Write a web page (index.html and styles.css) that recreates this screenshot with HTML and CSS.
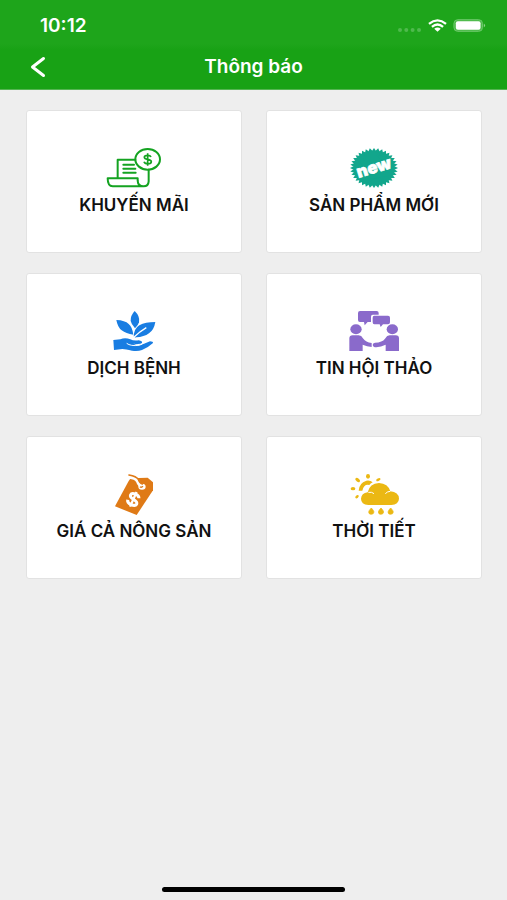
FILE: index.html
```html
<!DOCTYPE html>
<html lang="vi">
<head>
<meta charset="utf-8">
<meta name="viewport" content="width=device-width, initial-scale=1">
<title>Thông báo</title>
<link rel="stylesheet" href="styles.css">
</head>
<body>
<header class="header">
  <div class="status">
    <time class="clock">10:12</time>
    <div class="indicators">
      <svg class="signal" viewBox="0 0 24 4" aria-hidden="true"><circle cx="2" cy="2" r="2"/><circle cx="8.300" cy="2" r="2"/><circle cx="14.600" cy="2" r="2"/><circle cx="21" cy="2" r="2"/></svg>
      <svg class="wifi" viewBox="0 0 58 38" aria-hidden="true"><path d="M3 14Q29-7 55 14M12 23Q29 9 46 23" fill="none" stroke="#fff" stroke-width="7"/><path d="M19 29Q29 21 39 29L29 38Z" fill="#fff"/></svg>
      <svg class="battery" viewBox="0 0 100 40" aria-hidden="true"><rect x="2" y="2" width="88" height="36" rx="12" fill="#4cba49" stroke="#6cc86a" stroke-width="3"/><rect x="8" y="7" width="76" height="26" rx="6" fill="#fff"/><path d="M94 14q8 6 0 12Z" fill="#8bd489"/></svg>
    </div>
  </div>
  <div class="navbar">
    <button class="back" type="button" aria-label="Quay lại"><svg viewBox="0 0 16 22" aria-hidden="true"><path d="M13.500 2.500 2.500 11l11 8.500" fill="none" stroke="#fff" stroke-width="3" stroke-linecap="round" stroke-linejoin="round"/></svg></button>
    <h1 class="title">Thông báo</h1>
  </div>
</header>
<main class="grid">
  <a class="card" href="#khuyen-mai">
    <svg class="icon" viewBox="102 18 180 132" aria-hidden="true">
      <g fill="none" stroke="#14a321" stroke-width="6" stroke-linejoin="round" stroke-linecap="round">
        <path d="M143 113V59H196M236 89V124Q235 139 221 139H128Q113 139 113 115H203V122Q204 139 220 139"/>
        <path d="M160 74H192M160 86H196M160 98H197"/>
        <ellipse cx="233" cy="58" rx="37" ry="31"/>
      </g>
      <path d="M243 51Q241 46 233 46Q223 46 223 52Q223 57 233 58Q244 60 244 65Q244 71 233 71Q224 71 222 65M233 40V77" fill="none" stroke="#14a321" stroke-width="5"/>
    </svg>
    <span class="label">KHUYẾN MÃI</span>
  </a>
  <a class="card" href="#san-pham-moi">
    <svg class="icon" viewBox="132 18 180 132" aria-hidden="true">
      <g fill="#12a68c" transform="translate(222 84) scale(1.200 1)">
        <path id="tri" d="M0-60L52 30H-52Z"/>
        <use href="#tri" transform="rotate(10)"/><use href="#tri" transform="rotate(20)"/><use href="#tri" transform="rotate(30)"/><use href="#tri" transform="rotate(40)"/><use href="#tri" transform="rotate(50)"/><use href="#tri" transform="rotate(60)"/><use href="#tri" transform="rotate(70)"/><use href="#tri" transform="rotate(80)"/><use href="#tri" transform="rotate(90)"/><use href="#tri" transform="rotate(100)"/><use href="#tri" transform="rotate(110)"/>
      </g>
      <text class="burst" x="222" y="99" text-anchor="middle" transform="rotate(-17 222 84)">new</text>
    </svg>
    <span class="label">SẢN PHẨM MỚI</span>
  </a>
  <a class="card" href="#dich-benh">
    <svg class="icon" viewBox="102 30 180 132" aria-hidden="true">
      <g fill="#197de2">
        <path d="M194 36Q211 52 207 70Q204 80 195 88Q184 76 182 66Q181 50 194 36Z"/>
        <path d="M139 63Q165 64 176 75Q187 84 190 107Q168 104 155 94Q143 85 139 63Z"/>
        <path d="M256 69Q252 93 237 103Q222 114 199 115Q192 116 191 112Q193 88 208 79Q226 69 256 69Z"/>
        <path d="M130 123L151 121Q165 115 181 121Q190 126 206 124Q218 126 216 132Q211 137 190 134Q205 142 222 134L240 127Q250 127 249 132Q234 146 216 153Q203 158 186 155Q167 150 157 150L132 153Z"/>
      </g>
      <path d="M190 116Q210 97 229 86" fill="none" stroke="#fff" stroke-width="4"/>
      <path d="M170 133Q182 142 207 139Q219 137 220 129" fill="none" stroke="#fff" stroke-width="3"/>
    </svg>
    <span class="label">DỊCH BỆNH</span>
  </a>
  <a class="card" href="#tin-hoi-thao">
    <svg class="icon" viewBox="132 30 180 132" aria-hidden="true">
      <g fill="#8a6acb">
        <path d="M180 36H230Q236 36 236 42V47H218Q213 47 213 53V69H203L194 79L192 69H180Q174 69 174 63V42Q174 36 180 36Z"/>
        <path d="M223 50H264Q270 50 270 56V70Q270 76 264 76H249L242 84L239 76H223Q218 76 218 70V56Q218 50 223 50Z"/>
        <ellipse cx="168" cy="91" rx="17" ry="15"/><ellipse cx="277" cy="91" rx="17" ry="15"/>
        <path d="M148 156V118Q148 109 158 109H176Q184 109 190 119Q197 129 215 132V144Q201 143 188 137V156Z"/>
        <path d="M297 156V118Q297 109 287 109H269Q261 109 255 119Q247 130 225 131Q218 132 218 138Q219 145 229 145Q243 144 257 137V156Z"/>
      </g>
    </svg>
    <span class="label">TIN HỘI THẢO</span>
  </a>
  <a class="card" href="#gia-ca-nong-san">
    <svg class="icon" viewBox="162 21 180 132" aria-hidden="true">
      <path d="M236 48L242 40L293 38L309 52V76L260 150L195 124Z" fill="#df7a16"/>
      <path d="M238 36Q257 38 263 48Q267 60 276 64" fill="none" stroke="#fff" stroke-width="11"/>
      <ellipse cx="276" cy="65" rx="11" ry="9" fill="#fff"/>
      <path d="M237 30Q259 34 265 43Q268 54 277 57" fill="none" stroke="#df7a16" stroke-width="5" stroke-linecap="round"/>
      <path d="M270 65Q274 69 279 64" fill="none" stroke="#df7a16" stroke-width="4"/>
      <g transform="rotate(24 250 103)" fill="none" stroke="#fff"><path d="M264 93Q261 86 250 86Q237 86 237 94Q237 101 250 103Q265 105 265 112Q264 120 250 120Q237 120 235 111" stroke-width="9"/><path d="M250 79V127" stroke-width="7"/></g>
    </svg>
    <span class="label">GIÁ CẢ NÔNG SẢN</span>
  </a>
  <a class="card" href="#thoi-tiet">
    <svg class="icon" viewBox="132 21 180 132" aria-hidden="true">
      <g fill="#ebb813">
        <path d="M205 120Q183 118 183 101Q184 85 203 82Q209 55 237 54Q264 55 271 79Q296 81 297 101Q296 119 274 120Z"/>
        <path d="M176 77Q177 54 199 47Q211 45 218 52Q211 55 208 60Q192 56 187 77Z"/>
        <ellipse cx="204" cy="34" rx="6" ry="7"/>
        <ellipse cx="173" cy="45" rx="8" ry="5" transform="rotate(38 173 45)"/>
        <ellipse cx="159" cy="71" rx="7" ry="5"/>
        <ellipse cx="171" cy="95" rx="6" ry="4" transform="rotate(-42 171 95)"/>
        <ellipse cx="235" cy="44" rx="7" ry="4" transform="rotate(-28 235 44)"/>
        <path id="drop" d="M214 129Q222 137 222 141Q221 148 214 148Q206 148 206 141Q206 137 214 129Z" stroke="#ebb813" stroke-width="2"/>
        <use href="#drop" x="29"/><use href="#drop" x="58"/>
      </g>
      <path d="M205 82Q216 80 222 86M271 79Q262 79 256 86" fill="none" stroke="#fff" stroke-width="3"/>
    </svg>
    <span class="label">THỜI TIẾT</span>
  </a>
</main>
<footer class="footer"><div class="home-bar"></div></footer>
</body>
</html>
```
FILE: styles.css
```css
* {
  box-sizing: border-box;
}

body {
  margin: 0;
  min-height: 100vh;
  display: flex;
  flex-direction: column;
  background: #eeeeee;
  color: #111;
  font-family: Inter, "Noto Sans", sans-serif;
}

.header {
  background: linear-gradient(#1ea51b 0, #1ea51b 44px, #18a215 50px, #18a215 100%);
  border-bottom: 1px solid #55b553;
  color: #fff;
}

.status {
  height: 45px;
  padding: 6px 21px 0 40px;
  display: flex;
  align-items: center;
  justify-content: space-between;
}

.clock {
  font-size: 19px;
  line-height: 20px;
  font-weight: 600;
}

.indicators {
  display: flex;
  align-items: center;
  gap: 6px;
}

.signal {
  width: 24px;
  height: 4px;
  margin-top: 8px;
  fill: #4fba4d;
}

.wifi {
  width: 19px;
  height: 13px;
}

.battery {
  width: 33px;
  height: 13px;
}

.navbar {
  height: 44px;
  padding: 0 24px;
  display: grid;
  grid-template-columns: 32px 1fr 32px;
  align-items: center;
}

.back {
  height: 32px;
  padding: 0 6px;
  border: 0;
  background: none;
  display: flex;
  align-items: center;
}

.back svg {
  width: 16px;
  height: 22px;
}

.title {
  margin: 0;
  text-align: center;
  font-size: 19px;
  line-height: 24px;
  font-weight: 600;
}

.grid {
  flex: 1;
  padding: 20px 25px 20px 26px;
  display: grid;
  grid-template-columns: 1fr 1fr;
  align-content: start;
  gap: 20px 24px;
}

.card {
  padding: 35px 4px 37px;
  display: flex;
  flex-direction: column;
  align-items: center;
  gap: 5px;
  background: #fff;
  border: 1px solid #e2e2e2;
  border-radius: 3px;
  color: inherit;
  text-decoration: none;
}

.icon {
  width: 60px;
  height: 44px;
}

.label {
  font-size: 17px;
  line-height: 20px;
  font-weight: 600;
  text-align: center;
}

.burst {
  fill: #fff;
  stroke: #fff;
  stroke-width: 2px;
  font-size: 50px;
  font-weight: 900;
}

.footer {
  padding: 0 0 8px;
  display: flex;
  justify-content: center;
}

.home-bar {
  width: 36%;
  height: 5px;
  border-radius: 3px;
  background: #000;
}
```
